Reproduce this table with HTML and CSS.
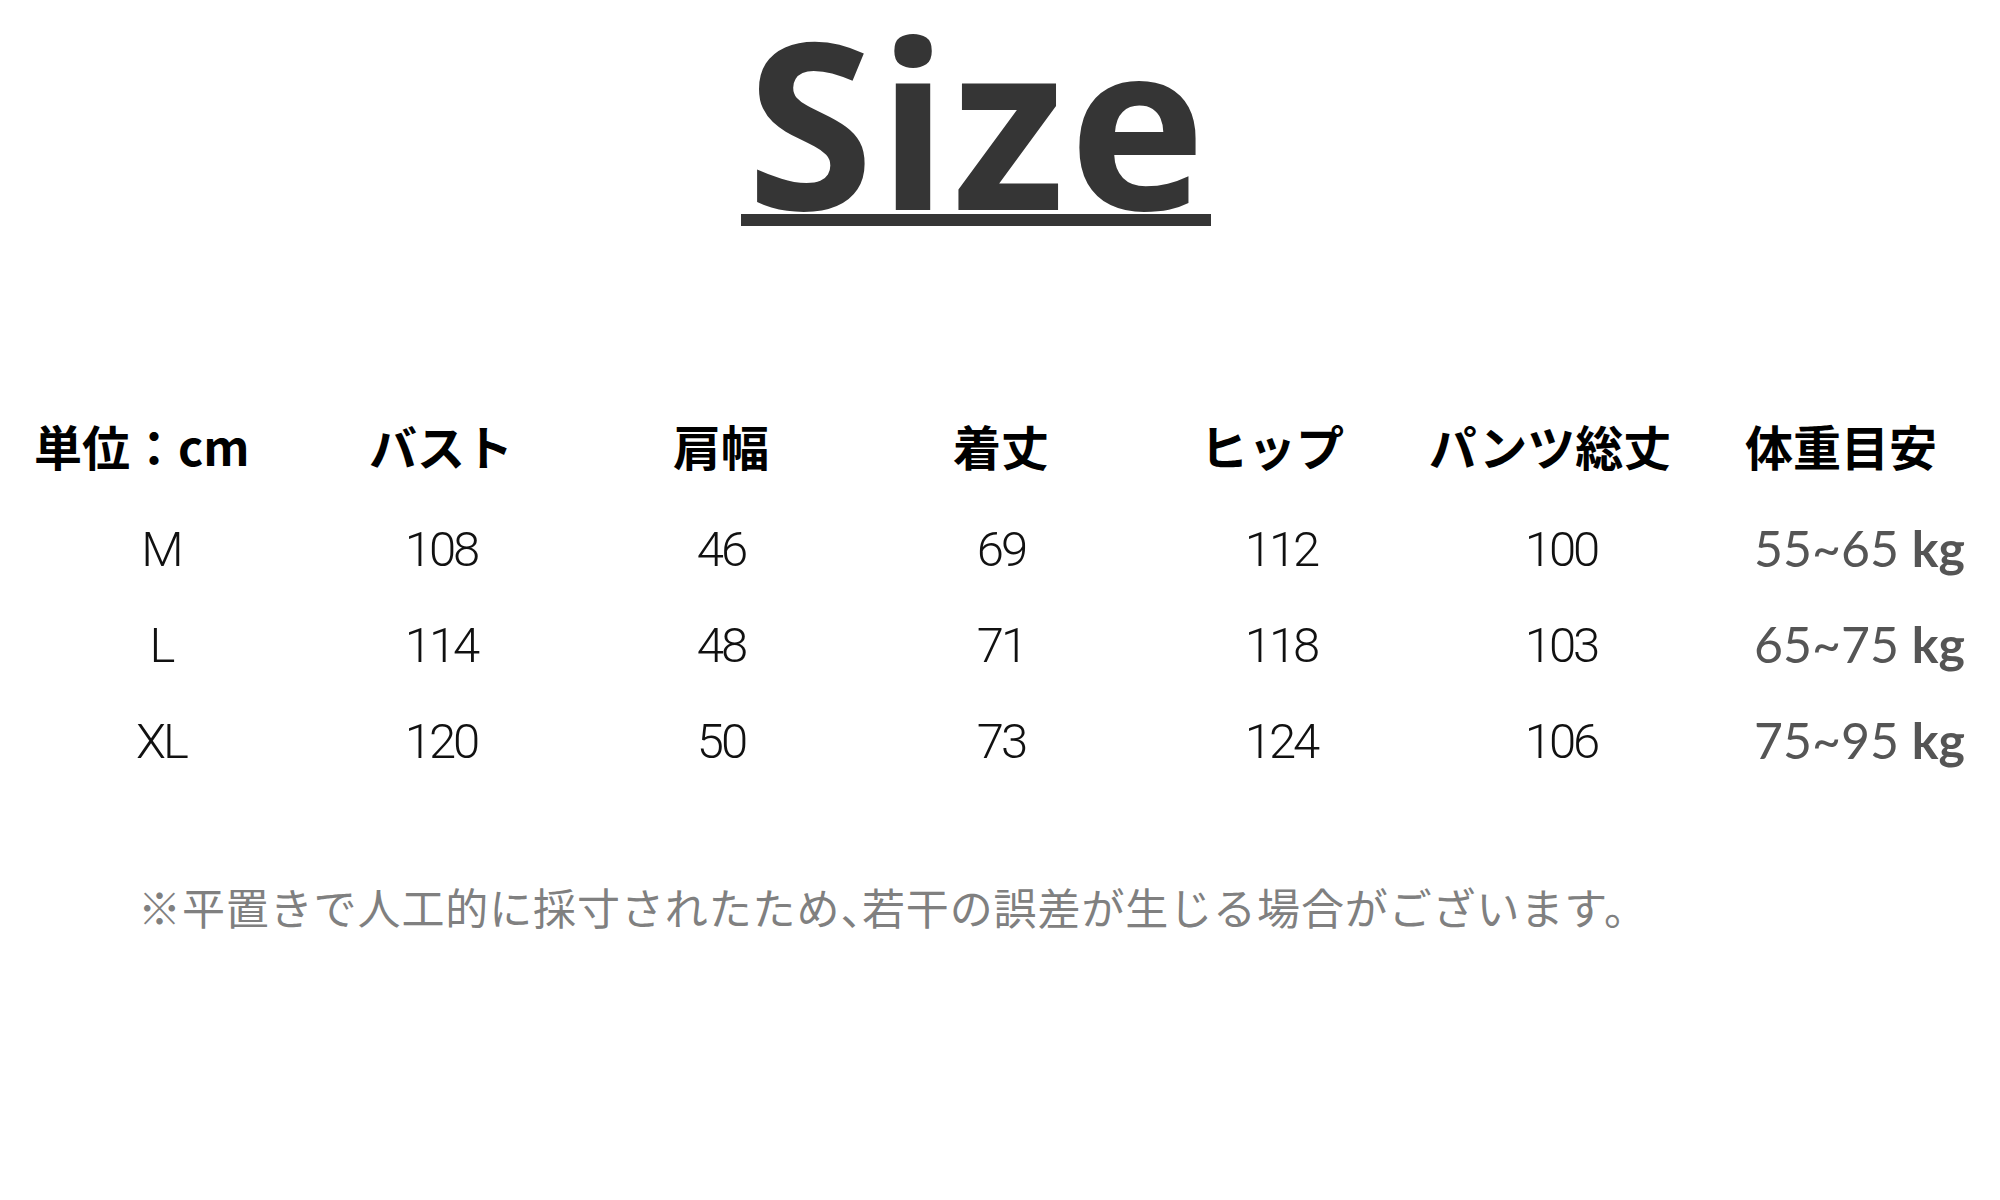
FILE: index.html
```html
<!DOCTYPE html>
<html lang="ja">
<head>
<meta charset="utf-8">
<title>Size</title>
<link rel="stylesheet" href="styles.css">
</head>
<body>
<div class="page">
  <div class="title-wrap">
    <h1 class="title"><span class="title-text">Size</span></h1>
  </div>

  <div class="table">
    <div class="row head">
      <div class="cell unit">単位：cm</div>
      <div class="cell">バスト</div>
      <div class="cell">肩幅</div>
      <div class="cell">着丈</div>
      <div class="cell hip">ヒップ</div>
      <div class="cell pants">パンツ総丈</div>
      <div class="cell">体重目安</div>
    </div>
    <div class="row data">
      <div class="cell">M</div>
      <div class="cell">108</div>
      <div class="cell">46</div>
      <div class="cell">69</div>
      <div class="cell">112</div>
      <div class="cell">100</div>
      <div class="cell weight">55~65 <b>kg</b></div>
    </div>
    <div class="row data">
      <div class="cell">L</div>
      <div class="cell">114</div>
      <div class="cell">48</div>
      <div class="cell">71</div>
      <div class="cell">118</div>
      <div class="cell">103</div>
      <div class="cell weight">65~75 <b>kg</b></div>
    </div>
    <div class="row data">
      <div class="cell">XL</div>
      <div class="cell">120</div>
      <div class="cell">50</div>
      <div class="cell">73</div>
      <div class="cell">124</div>
      <div class="cell">106</div>
      <div class="cell weight">75~95 <b>kg</b></div>
    </div>
  </div>

  <p class="note">※平置きで人工的に採寸されたため<span class="half">、</span>若干の誤差が生じる場合がございます。</p>
</div>
</body>
</html>
```

FILE: styles.css
```css
html, body {
  margin: 0;
  padding: 0;
  background: #ffffff;
}

.page {
  width: 2000px;
  height: 1200px;
  overflow: hidden;
  font-family: "Noto Sans CJK JP", "Noto Sans", sans-serif;
}

.title-wrap {
  text-align: center;
  padding-right: 48px;
  padding-top: 5px;
}

.title {
  display: inline-block;
  margin: 0;
  padding: 0 2px 0 6px;
  font-family: "Open Sans", "Noto Sans", sans-serif;
  font-weight: 700;
  font-size: 231px;
  color: #353535;
}

.title-text {
  display: block;
  line-height: 231px;
  letter-spacing: 4px;
}

.title::after {
  content: "";
  display: block;
  height: 12px;
  margin: -22px -2px 0 -6px;
  background: #353535;
}

.table {
  margin-top: 195px;
  padding-left: 21px;
}

.row {
  display: grid;
  grid-template-columns: repeat(7, 280px);
}

.cell {
  text-align: center;
  white-space: nowrap;
}

.head .cell {
  font-family: "Noto Sans CJK JP", sans-serif;
  font-weight: 700;
  font-size: 48px;
  line-height: 48px;
  color: #000000;
}

.head .unit {
  text-align: left;
  padding-left: 13px;
}

.head .hip {
  padding-right: 18px;
}

.head .pants {
  padding-right: 22px;
}

.head {
  margin-bottom: 33px;
}

.data .cell {
  font-family: Roboto, "Liberation Sans", sans-serif;
  font-weight: 300;
  font-size: 49px;
  line-height: 96px;
  letter-spacing: -3px;
  color: #111111;
}

.data .weight {
  font-family: Lato, "Open Sans", sans-serif;
  font-weight: 400;
  font-size: 50px;
  line-height: 92px;
  letter-spacing: 0;
  color: #555555;
  text-align: right;
  padding-right: 16px;
}

.data .weight b {
  font-weight: 700;
}

.note {
  margin: 95px 0 0 0;
  padding-left: 138px;
  font-family: "Noto Sans CJK JP", sans-serif;
  font-weight: 400;
  font-size: 43px;
  line-height: 43px;
  letter-spacing: 0.9px;
  color: #808080;
  white-space: nowrap;
}

.half {
  letter-spacing: -0.5em;
}
```
